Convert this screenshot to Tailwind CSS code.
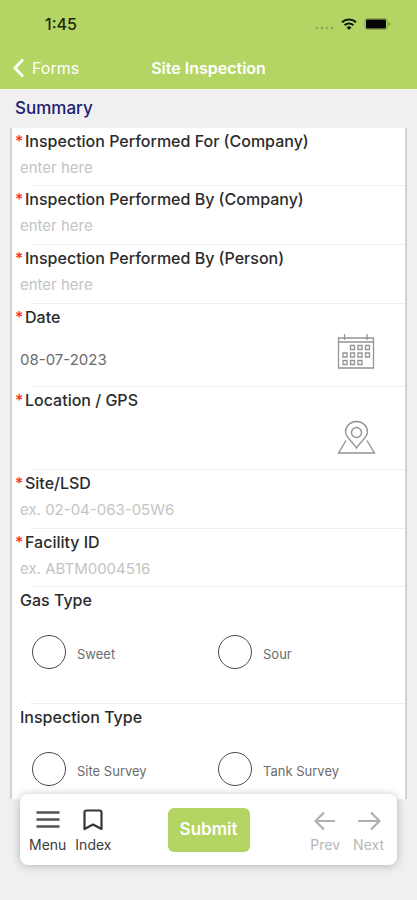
<!DOCTYPE html>
<html lang="en">
<head>
    <meta charset="UTF-8">
    <meta name="viewport" content="width=device-width, initial-scale=1.0">
    <title>Site Inspection</title>
    <script src="https://cdn.jsdelivr.net/npm/@tailwindcss/browser@4"></script>
</head>
<body class="bg-[#f0f0f0] font-['Inter',sans-serif] text-[#2b2b2b] h-screen flex flex-col overflow-hidden">

    <!-- Header -->
    <header class="bg-[#b4d564] shrink-0 pb-px">
        <div class="flex items-center justify-between h-12 pl-[45px] pr-[26px]">
            <span class="text-base font-medium text-[#1f2a0c]">1:45</span>
            <div class="flex items-center gap-1.5">
                <svg class="w-5 h-4" viewBox="0 0 20 16" fill="#8ba550">
                    <circle cx="2" cy="12" r="1.3"/><circle cx="7" cy="12" r="1.3"/><circle cx="12" cy="12" r="1.3"/><circle cx="17" cy="12" r="1.3"/>
                </svg>
                <svg class="w-4 h-3" viewBox="0 0 16 12" fill="none" stroke="#10160a" stroke-width="2.2">
                    <path d="M1 4.3a10.2 10.2 0 0 1 14 0"/>
                    <path d="M3.6 7.2a6.5 6.5 0 0 1 8.8 0"/>
                    <path d="M8 12L5.6 9.5a3.5 3.5 0 0 1 4.8 0z" fill="#10160a" stroke="none"/>
                </svg>
                <svg class="w-7 h-3" viewBox="0 0 28 12">
                    <rect x="2" y="0.5" width="22.5" height="11" rx="2.5" fill="none" stroke="#8ba550"/>
                    <rect x="3" y="1.5" width="20" height="9" rx="1" fill="#050505"/>
                    <path d="M25.5 3.5L27.8 6L25.5 8.5z" fill="#7f9a45"/>
                </svg>
            </div>
        </div>
        <div class="grid grid-cols-[1fr_auto_1fr] items-center h-10 px-3">
            <a href="#" class="flex items-center gap-2 text-base text-white">
                <svg class="w-3 h-5" viewBox="0 0 12 20" fill="none" stroke="currentColor" stroke-width="2.8"><path d="M11 1.5L3 10l8 8.5"/></svg>
                Forms
            </a>
            <h1 class="text-base font-semibold text-white">Site Inspection</h1>
        </div>
    </header>

    <h2 class="shrink-0 h-[39px] pl-[15px] text-[17px]/[39px] font-medium text-[#1c2173]">Summary</h2>

    <!-- Form -->
    <form id="inspection" class="flex-1 min-h-0 overflow-hidden mx-[10px] bg-white border-x-2 border-x-[#d2d2d2]">
        <div class="relative h-[58px] pt-px pl-2 after:absolute after:bottom-0 after:left-[18px] after:right-0 after:h-px after:bg-[#efefef]">
            <label for="company_for" class="flex items-center -ml-[5px] gap-0.5 text-base font-medium"><span class="w-2 text-[#fb2c2c]" aria-hidden="true">*</span>Inspection Performed For (Company)</label>
            <input id="company_for" type="text" placeholder="enter here" class="block w-full h-7 text-[15px] outline-none placeholder:text-[#c4c4c4]">
        </div>
        <div class="relative h-[59px] pt-px pl-2 after:absolute after:bottom-0 after:left-[18px] after:right-0 after:h-px after:bg-[#efefef]">
            <label for="company_by" class="flex items-center -ml-[5px] gap-0.5 text-base font-medium"><span class="w-2 text-[#fb2c2c]" aria-hidden="true">*</span>Inspection Performed By (Company)</label>
            <input id="company_by" type="text" placeholder="enter here" class="block w-full h-7 text-[15px] outline-none placeholder:text-[#c4c4c4]">
        </div>
        <div class="relative h-[59px] pt-px pl-2 after:absolute after:bottom-0 after:left-[18px] after:right-0 after:h-px after:bg-[#efefef]">
            <label for="person_by" class="flex items-center -ml-[5px] gap-0.5 text-base font-medium"><span class="w-2 text-[#fb2c2c]" aria-hidden="true">*</span>Inspection Performed By (Person)</label>
            <input id="person_by" type="text" placeholder="enter here" class="block w-full h-7 text-[15px] outline-none placeholder:text-[#c4c4c4]">
        </div>
        <div class="relative h-[83px] pt-px pl-2 after:absolute after:bottom-0 after:left-[18px] after:right-0 after:h-px after:bg-[#efefef]">
            <label for="date" class="flex items-center -ml-[5px] gap-0.5 text-base font-medium"><span class="w-2 text-[#fb2c2c]" aria-hidden="true">*</span>Date</label>
            <div class="flex items-center pt-0.5 pr-[29px]">
                <input id="date" type="text" value="08-07-2023" class="flex-1 min-w-0 h-10 pt-4 text-[15px] text-[#6b6b6b] outline-none">
                <button type="button" aria-label="Pick a date">
                    <svg class="w-10 h-10" viewBox="0 0 40 40" fill="none" stroke="#949494" stroke-width="1.3">
                        <path d="M2.5 7h35v30h-35zM2.5 11h35M8.5 3v6M31 3v6"/>
                        <path d="M14.500 14.500h4v4h-4zM22 14.500h4v4h-4zM29.500 14.500h4v4h-4zM7 22h4v4H7zM14.500 22h4v4h-4zM22 22h4v4h-4zM29.500 22h4v4h-4zM7 29.500h4v4H7zM14.500 29.500h4v4h-4zM22 29.500h4v4h-4z"/>
                    </svg>
                </button>
            </div>
        </div>
        <div class="relative h-[83px] pt-px pl-2 after:absolute after:bottom-0 after:left-[18px] after:right-0 after:h-px after:bg-[#efefef]">
            <label for="gps" class="flex items-center -ml-[5px] gap-0.5 text-base font-medium"><span class="w-2 text-[#fb2c2c]" aria-hidden="true">*</span>Location / GPS</label>
            <div class="flex items-center pt-0.5 pr-[29px]">
                <input id="gps" type="text" class="flex-1 min-w-0 h-10 pt-4 text-[15px] text-[#6b6b6b] outline-none">
                <button type="button" aria-label="Use my location">
                    <svg class="w-10 h-10" viewBox="0 0 40 40" fill="none" stroke="#949494" stroke-width="1.4">
                        <path d="M20.5 34C17.5 28.5 9.5 23.5 9.5 18a11 10.5 0 0 1 22 0C31.5 23.5 23.5 28.5 20.5 34z"/>
                        <circle cx="20.5" cy="18.5" r="5"/>
                        <path d="M10 26.5L2.5 39h36L31 26.5"/>
                    </svg>
                </button>
            </div>
        </div>
        <div class="relative h-[59px] pt-px pl-2 after:absolute after:bottom-0 after:left-[18px] after:right-0 after:h-px after:bg-[#efefef]">
            <label for="site" class="flex items-center -ml-[5px] gap-0.5 text-base font-medium"><span class="w-2 text-[#fb2c2c]" aria-hidden="true">*</span>Site/LSD</label>
            <input id="site" type="text" placeholder="ex. 02-04-063-05W6" class="block w-full h-7 text-[15px] outline-none placeholder:text-[#c4c4c4]">
        </div>
        <div class="relative h-[58px] pt-px pl-2 after:absolute after:bottom-0 after:left-[18px] after:right-0 after:h-px after:bg-[#efefef]">
            <label for="facility" class="flex items-center -ml-[5px] gap-0.5 text-base font-medium"><span class="w-2 text-[#fb2c2c]" aria-hidden="true">*</span>Facility ID</label>
            <input id="facility" type="text" placeholder="ex. ABTM0004516" class="block w-full h-7 text-[15px] outline-none placeholder:text-[#c4c4c4]">
        </div>
        <fieldset class="relative h-[117px] pl-2 after:absolute after:bottom-0 after:left-[18px] after:right-0 after:h-px after:bg-[#efefef]">
            <legend class="pt-px text-base font-medium">Gas Type</legend>
            <div class="grid grid-cols-2 pt-[23px] pl-3 pr-px">
                <label class="flex items-center gap-[11px] text-[13px] text-[#6b6b6b]"><input type="radio" name="gas" class="appearance-none size-[34px] rounded-full border border-[#4a4a4a] checked:bg-[#b4d564]"><span class="pt-1.5">Sweet</span></label>
                <label class="flex items-center gap-[11px] text-[13px] text-[#6b6b6b]"><input type="radio" name="gas" class="appearance-none size-[34px] rounded-full border border-[#4a4a4a] checked:bg-[#b4d564]"><span class="pt-1.5">Sour</span></label>
            </div>
        </fieldset>
        <fieldset class="relative h-[117px] pl-2">
            <legend class="pt-px text-base font-medium">Inspection Type</legend>
            <div class="grid grid-cols-2 pt-[23px] pl-3 pr-px">
                <label class="flex items-center gap-[11px] text-[13px] text-[#6b6b6b]"><input type="radio" name="survey" class="appearance-none size-[34px] rounded-full border border-[#4a4a4a] checked:bg-[#b4d564]"><span class="pt-1.5">Site Survey</span></label>
                <label class="flex items-center gap-[11px] text-[13px] text-[#6b6b6b]"><input type="radio" name="survey" class="appearance-none size-[34px] rounded-full border border-[#4a4a4a] checked:bg-[#b4d564]"><span class="pt-1.5">Tank Survey</span></label>
            </div>
        </fieldset>
    </form>

    <!-- Toolbar -->
    <nav class="relative shrink-0 grid grid-cols-[1fr_auto_1fr] items-center h-[71px] mx-5 -mt-[5px] mb-[35px] px-[9px] pt-1 bg-white rounded-lg shadow-[0_1px_10px_rgba(0,0,0,0.25)]">
        <div class="flex gap-[9px] text-sm text-[#3d3d3d]">
            <button type="button" class="flex flex-col items-center gap-0.5">
                <svg class="w-6 h-6" viewBox="0 0 24 24" fill="none" stroke="#50505a" stroke-width="2.3"><path d="M0.5 3.5h23M0.5 10.5h23M0.5 17.5h23"/></svg>
                Menu
            </button>
            <button type="button" class="flex flex-col items-center gap-0.5">
                <svg class="w-6 h-6" viewBox="0 0 24 24" fill="none" stroke="#35353d" stroke-width="2.2" stroke-linejoin="round"><path d="M3.5 20V3.500q0-2 2-2h13q2 0 2 2V20L12 15.500z"/></svg>
                Index
            </button>
        </div>
        <button type="submit" form="inspection" class="w-[82px] h-11 mb-1 rounded-md bg-[#b4d564] text-[17px] font-semibold text-white">Submit</button>
        <div class="flex justify-end gap-[13px] pr-1 text-sm text-[#b8b8b8]">
            <button type="button" class="flex flex-col items-center gap-0.5">
                <svg class="w-6 h-6" viewBox="0 0 24 24" fill="none" stroke="#b0b0b0" stroke-width="2.2"><path d="M22 12H3M11 3.500L2.500 12l8.500 8.500"/></svg>
                Prev
            </button>
            <button type="button" class="flex flex-col items-center gap-0.5">
                <svg class="w-6 h-6" viewBox="0 0 24 24" fill="none" stroke="#b0b0b0" stroke-width="2.2"><path d="M1 12h21M14 3.500l8.500 8.500-8.500 8.500"/></svg>
                Next
            </button>
        </div>
    </nav>
</body>
</html>
